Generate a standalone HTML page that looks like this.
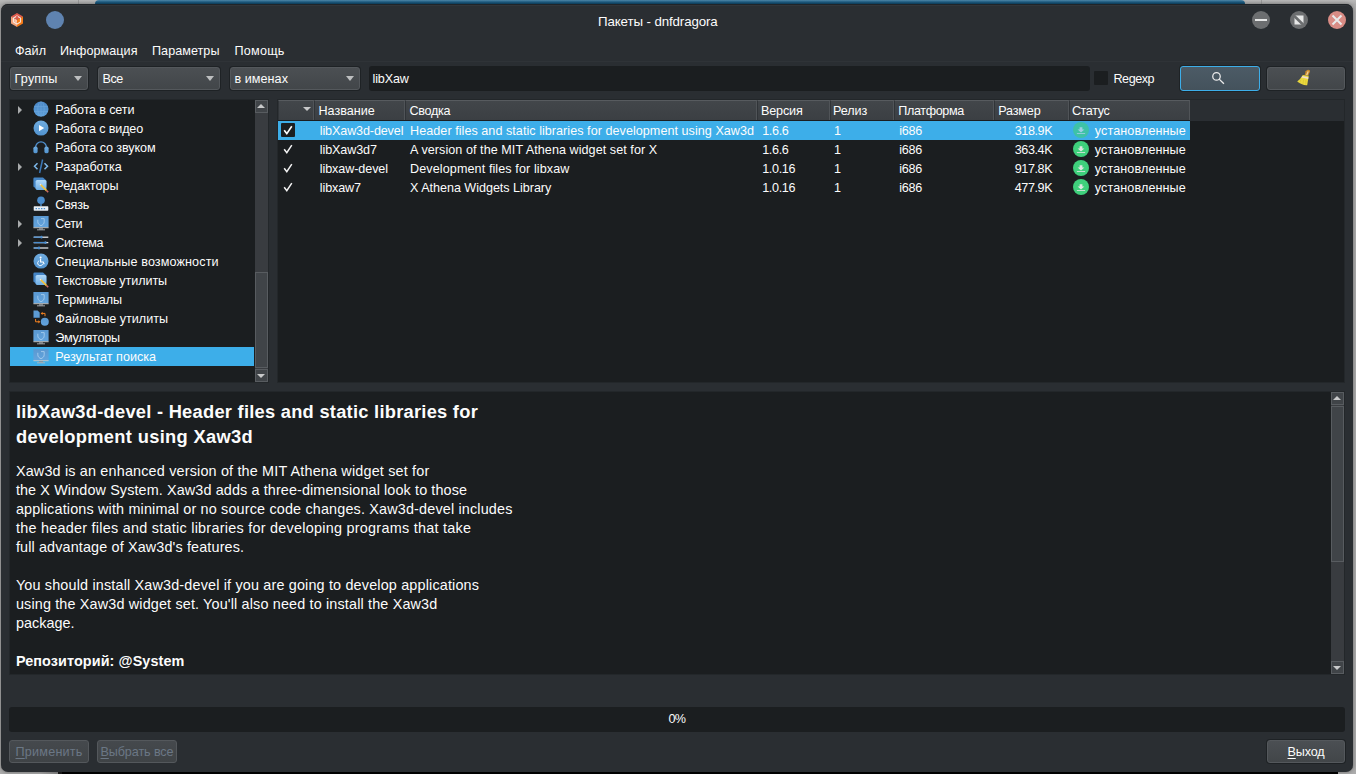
<!DOCTYPE html>
<html lang="ru">
<head>
<meta charset="utf-8">
<title>Пакеты - dnfdragora</title>
<style>
*{box-sizing:border-box;margin:0;padding:0}
html,body{width:1356px;height:774px;overflow:hidden}
body{position:relative;background:#adadad;font-family:"Liberation Sans",sans-serif;font-size:12.6px;color:#fcfcfc;-webkit-font-smoothing:antialiased}
.abs{position:absolute}
u{text-underline-offset:2px;text-decoration-thickness:1px}
#bgtop{left:0;top:0;width:1356px;height:5px;background:linear-gradient(#b9b9b9,#aaaaaa)}
#bluebar{left:95px;top:0;width:1150px;height:5px;border-radius:4px 4px 0 0;background:linear-gradient(#5189a9 0%,#1f6088 40%,#0e4768 85%)}
#bgbottom{left:58px;top:770px;width:1280px;height:4px;background:#000}
.vline{top:0;width:1px;height:4px;background:#9a9a9a}
#win{left:1px;top:4px;width:1352px;height:768px;border-radius:7px;background:#2a2e32;box-shadow:inset 0 1px 0 #202428,inset 0 2px 0 rgba(255,255,255,.035),0 0 4px rgba(0,0,0,.4)}
.t{position:absolute;white-space:nowrap;line-height:19px;height:19px}
#title{left:0;width:1316px;top:11px;text-align:center;font-size:13.2px}
.menu{top:41px}
.sep{left:1px;top:61px;width:1352px;height:1px;background:#2f3337}
.combo{position:absolute;top:67px;height:23px;border:1px solid #54585c;border-radius:3px;background:linear-gradient(#4b4f53,#424649);box-shadow:0 0 0 1px rgba(24,27,29,.6)}
.combo .t{left:4px;top:1px}
.combo:after{content:"";position:absolute;right:5.5px;top:8px;border:4px solid transparent;border-top:5px solid #bdbfc0;border-bottom:0}
.field{background:#1b1e20;border-radius:3px}
.btn{position:absolute;border:1px solid #54585c;border-radius:3px;background:linear-gradient(#4b4f53,#424649);box-shadow:0 0 0 1px rgba(24,27,29,.6);text-align:center}
.btn.dis{color:#6f7478;background:linear-gradient(#45494d,#3f4346);border-color:#54585c;box-shadow:none}
.view{position:absolute;background:#1b1e20;border:1px solid #23272a}
.sbtrack{position:absolute;background:#393c40}
.sbbtn{position:absolute;width:13px;height:13px;background:#404448;border:1px solid #585c60}
.sbh{position:absolute;width:13px;background:#404448;border:1px solid #585c60}
.up:after,.dn:after{content:"";position:absolute;left:.8px;top:3px;border:4px solid transparent}
.up:after{border-bottom:4px solid #c8c9ca;border-top:0}
.dn:after{border-top:4px solid #c8c9ca;border-bottom:0;top:3.5px}
.row{position:absolute;left:0;height:19px;width:100%}
.sel{background:#3daee9}
.exp{position:absolute;border:4px solid transparent;border-left:4.5px solid #a9abac;border-right:0}
.ico{position:absolute;left:23px;top:1px;width:16px;height:16px}
.row .t{left:45px;top:0}
.hdr{position:absolute;top:0;height:20px;background:linear-gradient(#42464a,#3b3f43);border-top:1px solid #575b5f;border-right:1px solid #505458;border-left:1px solid #303438}
.hdr .t{left:4px;top:1px}
.cb{position:absolute;left:3px;top:2px;width:14px;height:14px;background:#1b1e20;border-radius:1px}
.trow{position:absolute;left:0;width:912px;height:19px}
.trow .t{top:0}
.st{position:absolute;left:795px;top:1px;width:16px;height:16px}
</style>
</head>
<body>
<svg width="0" height="0" style="position:absolute">
<defs>
<linearGradient id="gb" x1="0" y1="0" x2="0" y2="1"><stop offset="0" stop-color="#6db0e6"/><stop offset="1" stop-color="#3f7ec0"/></linearGradient>
<linearGradient id="gm" x1="0" y1="0" x2="0" y2="1"><stop offset="0" stop-color="#5a98d1"/><stop offset="1" stop-color="#63a4dd"/></linearGradient>
<linearGradient id="gp" x1="0" y1="0" x2="0" y2="1"><stop offset="0" stop-color="#70acdf"/><stop offset="1" stop-color="#5193cf"/></linearGradient>
<linearGradient id="ge" x1="0" y1="0" x2="0" y2="1"><stop offset="0" stop-color="#b2d9f8"/><stop offset="1" stop-color="#6eaee6"/></linearGradient>
<linearGradient id="gb2" x1="0" y1="0" x2="0" y2="1"><stop offset="0" stop-color="#4885c4"/><stop offset="1" stop-color="#5fa1db"/></linearGradient>
<symbol id="i-globe" viewBox="0 0 16 16"><circle cx="8" cy="8.1" r="7.5" fill="url(#gb2)"/><g fill="none" stroke="#78b0e2" stroke-width=".7" opacity=".6"><ellipse cx="8" cy="8.1" rx="3.2" ry="7.3"/><path d="M8 .8V15.4M1.2 5.6H14.8M1.2 10.6H14.8"/></g></symbol>
<symbol id="i-play" viewBox="0 0 16 16"><circle cx="8" cy="8.1" r="7.5" fill="url(#gp)"/><path d="M6 4.9 L11.2 8.1 L6 11.3 Z" fill="#fff"/></symbol>
<symbol id="i-head" viewBox="0 0 16 16"><path d="M2.6 9.5 V8.4 A5.4 5.6 0 0 1 13.4 8.4 V9.5" fill="none" stroke="#4f8fce" stroke-width="1.3"/><rect x=".4" y="7.4" width="4.2" height="6.9" rx="1.9" fill="url(#gp)"/><rect x="11.4" y="7.4" width="4.2" height="6.9" rx="1.9" fill="url(#gp)"/></symbol>
<symbol id="i-code" viewBox="0 0 16 16"><path d="M4.5 5.2 L1.5 8.2 L4.5 11.2 M11.5 5.2 L14.5 8.2 L11.5 11.2" fill="none" stroke="#7db8ea" stroke-width="1.5"/><path d="M9.6 1.5 L6.6 15" stroke="#3b78b8" stroke-width="1.5"/></symbol>
<symbol id="i-edit" viewBox="0 0 16 16"><path d="M.4 1.8 Q.4 .6 1.6 .6 H10 L13.4 3.4 V10 L11.6 13 H4.6 L.4 9.4 Z" fill="#4585c6"/><rect x="2.6" y="2.9" width="10.8" height="10" rx="1.6" fill="url(#ge)"/><path d="M7.6 7.6 L13.6 13.6" stroke="#f2c23c" stroke-width="1.7"/><path d="M13.6 13.6 L15.2 15.2" stroke="#cf6a62" stroke-width="1.5"/><path d="M7 7 L8 8" stroke="#e6e6e6" stroke-width="1.2"/></symbol>
<symbol id="i-comm" viewBox="0 0 16 16"><circle cx="8" cy="4.3" r="3.8" fill="#4a8ccc"/><rect x="7.3" y="8" width="1.4" height="2.5" fill="#4a8ccc"/><rect x=".7" y="10.3" width="14.6" height="4.4" rx=".6" fill="#e8eef4"/><g fill="#4a8ccc"><rect x="2.6" y="12" width="1.4" height="1.2"/><rect x="5.3" y="12" width="1.4" height="1.2"/><rect x="8" y="12" width="1.4" height="1.2"/><rect x="10.7" y="12" width="1.4" height="1.2"/></g></symbol>
<symbol id="i-mon" viewBox="0 0 16 16"><rect x=".4" y=".9" width="15.2" height="11.4" rx=".5" fill="url(#gm)"/><rect x=".4" y="12.2" width="15.2" height="1" fill="#c3c6c9"/><rect x="6" y="13.2" width="4" height="1.3" fill="#8d9196"/><rect x="4" y="14.4" width="8" height=".9" fill="#b4b7ba"/><path d="M8 3.6 H11.2 V6.8 C11.2 8.9 9.6 10 8 10.7 C6.4 10 4.8 8.9 4.8 6.8 V4.8" fill="none" stroke="#b4d6f2" stroke-width=".75"/></symbol>
<symbol id="i-slid" viewBox="0 0 16 16"><g stroke-width="1.3"><path d="M.7 3.2H15.3" stroke="#dfe3e6"/><path d="M.7 3.2H8.5" stroke="#4a8ccc"/><path d="M.7 8.6H15.3" stroke="#dfe3e6"/><path d="M.7 8.6H12.5" stroke="#4a8ccc"/><path d="M.7 14H15.3" stroke="#dfe3e6"/><path d="M.7 14H6" stroke="#4a8ccc"/></g><g fill="#4a8ccc"><rect x="7.5" y="1.8" width="2" height="2.8" rx=".8"/><rect x="11.5" y="7.2" width="2" height="2.8" rx=".8"/><rect x="5" y="12.6" width="2" height="2.8" rx=".8"/></g></symbol>
<symbol id="i-acc" viewBox="0 0 16 16"><circle cx="8" cy="8.1" r="7.5" fill="url(#gp)"/><circle cx="7.6" cy="4.4" r="1" fill="#fff"/><path d="M7.6 5.7 V9 H10.2 L11.2 11.3" fill="none" stroke="#fff" stroke-width="1.1"/><path d="M6.2 7.7 A2.6 2.6 0 1 0 9.8 10.7" fill="none" stroke="#fff" stroke-width=".9"/></symbol>
<symbol id="i-file" viewBox="0 0 16 16"><path d="M.5 .5 H4.6 L6.7 2.6 V7.7 H.5 Z" fill="#5c9bd4"/><circle cx="11.8" cy="11.7" r="4" fill="url(#gm)"/><path d="M8.6 3.4 H12 V6.2 M2.6 9 V11.8 H6" fill="none" stroke="#f58220" stroke-width="1"/><path d="M9.6 1.8 L7.7 3.4 L9.6 5 Z M5.4 10.2 L7.3 11.8 L5.4 13.4 Z" fill="#f58220"/></symbol>
<symbol id="i-inst" viewBox="0 0 16 16"><circle cx="8" cy="8" r="8" fill="#3fd07c"/><path d="M6.6 5.2 H9.4 V7.4 H11.4 L8 10.6 L4.6 7.4 H6.6 Z" fill="#dfe6e2"/><rect x="3.9" y="11" width="8.2" height=".9" fill="#d4e2da"/></symbol>
</defs></svg>
<div id="bgtop" class="abs"></div>
<div class="abs vline" style="left:78px"></div>
<div class="abs vline" style="left:1261px"></div>
<div id="bluebar" class="abs"></div>
<div id="bgbottom" class="abs"></div>
<div class="abs" style="left:40px;top:770px;width:18px;height:4px;background:linear-gradient(90deg,#adadad,#8a8a8a)"></div>
<div class="abs" style="left:58px;top:770px;width:4px;height:4px;background:#1c1c1c"></div>
<div id="win" class="abs"></div>

<!-- title bar -->
<svg class="abs" style="left:9px;top:12px" width="16" height="16" viewBox="0 0 16 16">
 <polygon points="8,1 14,4.5 8,8 2,4.5" fill="#dc5a4c"/>
 <polygon points="2,4.5 8,8 8,15 2,11.5" fill="#f2a27a"/>
 <polygon points="14,4.5 8,8 8,15 14,11.5" fill="#f47a18"/>
 <polygon points="8,4 11.5,6 11.5,10 8,12 4.5,10 4.5,6" fill="none" stroke="#fbeee8" stroke-width="1.2" opacity=".9"/>
 <polygon points="5.6,6.6 8,8 8,10.8 5.6,9.4" fill="#f6d6c8" opacity=".7"/>
 <polygon points="10.4,6.6 8,8 8,10.8 10.4,9.4" fill="#f47a18"/>
 <rect x="7" y="4.2" width="2" height="1.2" fill="#dc5a4c"/>
</svg>
<div class="abs" style="left:45.8px;top:10.6px;width:18.4px;height:18.4px;border-radius:50%;background:#5f83b0"></div>
<svg class="abs" style="left:1251px;top:10px" width="96" height="20" viewBox="0 0 96 20">
 <circle cx="10" cy="10" r="9" fill="#6c6e70"/><rect x="4" y="9" width="12" height="2" fill="#e6e7e7"/>
 <circle cx="48" cy="10" r="9" fill="#6c6e70"/><rect x="43.5" y="5.5" width="9" height="9" fill="#e6e7e7"/><path d="M42.5 5.2 L53 15.5" stroke="#6c6e70" stroke-width="2.6"/>
 <circle cx="86" cy="10" r="9" fill="#d98c85"/><path d="M81.5 5.5 L90.5 14.5 M90.5 5.5 L81.5 14.5" stroke="#e9eaea" stroke-width="2"/>
</svg>

<!-- menu -->
<div class="abs sep"></div>

<!-- toolbar -->
<div class="combo" style="left:10px;width:78px"></div>
<div class="combo" style="left:98px;width:122px"></div>
<div class="combo" style="left:230px;width:130px"></div>
<div class="abs field" style="left:369px;top:66px;width:721px;height:25px"></div>
<div class="abs field" style="left:1094px;top:71px;width:14px;height:14px;border-radius:1px"></div>
<div class="btn" style="left:1180px;top:66px;width:80px;height:25px;border-color:#3daee9;background:linear-gradient(#4c5b66,#44525c)">
 <svg style="position:absolute;left:30px;top:3px" width="16" height="16" viewBox="0 0 16 16"><circle cx="5.5" cy="6.4" r="3.75" fill="none" stroke="#ececec" stroke-width="1.25"/><path d="M8.2 9.1 L12.9 13.8" stroke="#ececec" stroke-width="1.3"/></svg>
</div>
<div class="btn" style="left:1267px;top:67px;width:78px;height:23px">
 <svg style="position:absolute;left:-1px;top:-1px" width="78" height="23" viewBox="0 0 78 23"><path d="M40.2 2.9 Q41.6 2.3 42.8 3.3 L43 4.6 L41.3 8.5 L37.7 7.9 L38.7 4.3 Z" fill="#c8882c"/><path d="M40.6 4.2 L41.8 4.6 L40.4 8.2 L39 8 Z" fill="#efcf96"/><path d="M35.8 7.9 L41.7 8.8 L40.2 18.2 Q37.8 18.6 35 17.3 Q32.2 16.2 30.2 14.6 Q33.6 11.8 35.8 7.9 Z" fill="#e9d83e"/><path d="M35.3 9.1 L41.5 10.3 L41.2 12 L34.5 10.5 Z" fill="#f0dccc"/><path d="M33.9 12.5 L32.8 15.5 M36.7 12.5 L36 16.8 M38.9 13 L38.7 17.6" stroke="#d6c32e" stroke-width=".6" fill="none"/></svg>
</div>

<!-- tree -->
<div class="view" id="tree" style="left:9px;top:99px;width:260px;height:284px"></div>
<div class="sbtrack" style="left:255px;top:100px;width:13px;height:282px"></div>
<div class="sbbtn up" style="left:255px;top:100px"></div>
<div class="sbbtn dn" style="left:255px;top:369px"></div>
<div class="sbh" style="left:255px;top:272px;height:96px"></div>
<div class="exp" style="left:18px;top:105.7px"></div>
<svg class="abs" style="left:33px;top:101px" width="16" height="16"><use href="#i-globe"/></svg>
<svg class="abs" style="left:33px;top:120px" width="16" height="16"><use href="#i-play"/></svg>
<svg class="abs" style="left:33px;top:139px" width="16" height="16"><use href="#i-head"/></svg>
<div class="exp" style="left:18px;top:162.7px"></div>
<svg class="abs" style="left:33px;top:158px" width="16" height="16"><use href="#i-code"/></svg>
<svg class="abs" style="left:33px;top:177px" width="16" height="16"><use href="#i-edit"/></svg>
<svg class="abs" style="left:33px;top:196px" width="16" height="16"><use href="#i-comm"/></svg>
<div class="exp" style="left:18px;top:219.7px"></div>
<svg class="abs" style="left:33px;top:215px" width="16" height="16"><use href="#i-mon"/></svg>
<div class="exp" style="left:18px;top:238.7px"></div>
<svg class="abs" style="left:33px;top:234px" width="16" height="16"><use href="#i-slid"/></svg>
<svg class="abs" style="left:33px;top:253px" width="16" height="16"><use href="#i-acc"/></svg>
<svg class="abs" style="left:33px;top:272px" width="16" height="16"><use href="#i-edit"/></svg>
<svg class="abs" style="left:33px;top:291px" width="16" height="16"><use href="#i-mon"/></svg>
<svg class="abs" style="left:33px;top:310px" width="16" height="16"><use href="#i-file"/></svg>
<svg class="abs" style="left:33px;top:329px" width="16" height="16"><use href="#i-mon"/></svg>
<div class="abs sel" style="left:10px;top:347px;width:244px;height:19px"></div>
<svg class="abs" style="left:33px;top:348px" width="16" height="16" style="opacity:.55"><use href="#i-mon"/></svg>

<!-- table -->
<div class="view" id="table" style="left:277px;top:99px;width:1068px;height:284px"></div>
<div class="hdr" style="left:278px;top:100px;width:36px"></div>
<div class="hdr" style="left:314px;top:100px;width:91px"></div>
<div class="hdr" style="left:405px;top:100px;width:352px"></div>
<div class="hdr" style="left:757px;top:100px;width:73px"></div>
<div class="hdr" style="left:830px;top:100px;width:64px"></div>
<div class="hdr" style="left:894px;top:100px;width:100px"></div>
<div class="hdr" style="left:994px;top:100px;width:75px"></div>
<div class="hdr" style="left:1069px;top:100px;width:121px"></div>
<div class="abs" style="left:303px;top:107px;border:4px solid transparent;border-top:4.5px solid #c8c9ca;border-bottom:0"></div>
<div class="abs" style="left:1190px;top:100px;width:154px;height:21px;background:#2a2e32"></div>
<div class="abs sel" style="left:278px;top:121px;width:912px;height:19px"></div>
<div class="cb" style="left:281px;top:123px"><svg width="14" height="14" viewBox="0 0 14 14"><path d="M3.2 7.2 L5.8 10.6 L10.8 3.2" fill="none" stroke="#fff" stroke-width="1.6"/></svg></div>
<svg class="abs" style="left:1073px;top:122px;opacity:.6" width="16" height="16"><use href="#i-inst"/></svg>
<svg class="abs" style="left:281px;top:142px" width="14" height="14" viewBox="0 0 14 14"><path d="M3.2 7.2 L5.8 10.6 L10.8 3.2" fill="none" stroke="#f4f4f4" stroke-width="1.5"/></svg>
<svg class="abs" style="left:1073px;top:141px" width="16" height="16"><use href="#i-inst"/></svg>
<svg class="abs" style="left:281px;top:161px" width="14" height="14" viewBox="0 0 14 14"><path d="M3.2 7.2 L5.8 10.6 L10.8 3.2" fill="none" stroke="#f4f4f4" stroke-width="1.5"/></svg>
<svg class="abs" style="left:1073px;top:160px" width="16" height="16"><use href="#i-inst"/></svg>
<svg class="abs" style="left:281px;top:180px" width="14" height="14" viewBox="0 0 14 14"><path d="M3.2 7.2 L5.8 10.6 L10.8 3.2" fill="none" stroke="#f4f4f4" stroke-width="1.5"/></svg>
<svg class="abs" style="left:1073px;top:179px" width="16" height="16"><use href="#i-inst"/></svg>

<!-- description -->
<div class="view" id="desc" style="left:9px;top:391px;width:1336px;height:284px"></div>
<div class="sbtrack" style="left:1331px;top:392px;width:13px;height:282px"></div>
<div class="sbbtn up" style="left:1331px;top:392px"></div>
<div class="sbbtn dn" style="left:1331px;top:661px"></div>
<div class="sbh" style="left:1331px;top:406px;height:156px"></div>
<!-- progress -->
<div class="abs field" style="left:9px;top:707px;width:1336px;height:25px"></div>
<!-- buttons -->
<div class="btn dis" style="left:9px;top:740px;width:80px;height:23px"></div>
<div class="btn dis" style="left:97px;top:740px;width:80px;height:23px"></div>
<div class="btn" style="left:1267px;top:740px;width:78px;height:23px"></div>
<div class="t" style="left:598px;top:12px;font-size:13.3px;line-height:19px;height:19px;letter-spacing:-0.106px">Пакеты - dnfdragora</div>
<div class="t" style="left:15px;top:42px;font-size:12.6px;line-height:19px;height:19px;letter-spacing:0.009px">Файл</div>
<div class="t" style="left:60px;top:42px;font-size:12.6px;line-height:19px;height:19px;letter-spacing:0.041px">Информация</div>
<div class="t" style="left:152px;top:42px;font-size:12.6px;line-height:19px;height:19px;letter-spacing:0.042px">Параметры</div>
<div class="t" style="left:234.5px;top:42px;font-size:12.6px;line-height:19px;height:19px;letter-spacing:0.244px">Помощь</div>
<div class="t" style="left:14.6px;top:70px;font-size:12.6px;line-height:19px;height:19px;letter-spacing:0.169px">Группы</div>
<div class="t" style="left:102.5px;top:70px;font-size:12.6px;line-height:19px;height:19px;letter-spacing:-0.481px">Все</div>
<div class="t" style="left:234.5px;top:70px;font-size:12.6px;line-height:19px;height:19px;letter-spacing:0.046px">в именах</div>
<div class="t" style="left:372.6px;top:70px;font-size:12.6px;line-height:19px;height:19px;letter-spacing:-0.165px">libXaw</div>
<div class="t" style="left:1113.5px;top:70px;font-size:12.6px;line-height:19px;height:19px;letter-spacing:-0.477px">Regexp</div>
<div class="t" style="left:55.3px;top:101px;font-size:12.6px;line-height:19px;height:19px;letter-spacing:-0.147px">Работа в сети</div>
<div class="t" style="left:55.3px;top:120px;font-size:12.6px;line-height:19px;height:19px;letter-spacing:-0.158px">Работа с видео</div>
<div class="t" style="left:55.3px;top:139px;font-size:12.6px;line-height:19px;height:19px;letter-spacing:-0.103px">Работа со звуком</div>
<div class="t" style="left:55.3px;top:158px;font-size:12.6px;line-height:19px;height:19px;letter-spacing:-0.088px">Разработка</div>
<div class="t" style="left:55.3px;top:177px;font-size:12.6px;line-height:19px;height:19px;letter-spacing:-0.008px">Редакторы</div>
<div class="t" style="left:55.3px;top:196px;font-size:12.6px;line-height:19px;height:19px;letter-spacing:-0.181px">Связь</div>
<div class="t" style="left:55.3px;top:215px;font-size:12.6px;line-height:19px;height:19px;letter-spacing:-0.424px">Сети</div>
<div class="t" style="left:55.3px;top:234px;font-size:12.6px;line-height:19px;height:19px;letter-spacing:-0.405px">Система</div>
<div class="t" style="left:55.3px;top:253px;font-size:12.6px;line-height:19px;height:19px;letter-spacing:0.112px">Специальные возможности</div>
<div class="t" style="left:55.3px;top:272px;font-size:12.6px;line-height:19px;height:19px;letter-spacing:-0.080px">Текстовые утилиты</div>
<div class="t" style="left:55.3px;top:291px;font-size:12.6px;line-height:19px;height:19px;letter-spacing:-0.041px">Терминалы</div>
<div class="t" style="left:55.3px;top:310px;font-size:12.6px;line-height:19px;height:19px;letter-spacing:0.009px">Файловые утилиты</div>
<div class="t" style="left:55.3px;top:329px;font-size:12.6px;line-height:19px;height:19px;letter-spacing:-0.235px">Эмуляторы</div>
<div class="t" style="left:55.3px;top:348px;font-size:12.6px;line-height:19px;height:19px;letter-spacing:0.005px">Результат поиска</div>
<div class="t" style="left:318.4px;top:102px;font-size:12.6px;line-height:19px;height:19px;letter-spacing:0.029px">Название</div>
<div class="t" style="left:409.4px;top:102px;font-size:12.6px;line-height:19px;height:19px;letter-spacing:-0.294px">Сводка</div>
<div class="t" style="left:761px;top:102px;font-size:12.6px;line-height:19px;height:19px;letter-spacing:-0.157px">Версия</div>
<div class="t" style="left:833px;top:102px;font-size:12.6px;line-height:19px;height:19px;letter-spacing:-0.065px">Релиз</div>
<div class="t" style="left:898.2px;top:102px;font-size:12.6px;line-height:19px;height:19px;letter-spacing:-0.346px">Платформа</div>
<div class="t" style="left:998.2px;top:102px;font-size:12.6px;line-height:19px;height:19px;letter-spacing:-0.163px">Размер</div>
<div class="t" style="left:1071.9px;top:102px;font-size:12.6px;line-height:19px;height:19px;letter-spacing:-0.402px">Статус</div>
<div class="t" style="left:319.8px;top:122px;font-size:12.6px;line-height:19px;height:19px;letter-spacing:-0.135px">libXaw3d-devel</div>
<div class="t" style="left:410.1px;top:122px;font-size:12.6px;line-height:19px;height:19px;letter-spacing:0.039px">Header files and static libraries for development using Xaw3d</div>
<div class="t" style="left:762.2px;top:122px;font-size:12.6px;line-height:19px;height:19px;letter-spacing:-0.337px">1.6.6</div>
<div class="t" style="left:834px;top:122px;font-size:12.6px;line-height:19px;height:19px;letter-spacing:-1.416px">1</div>
<div class="t" style="left:899.3px;top:122px;font-size:12.6px;line-height:19px;height:19px;letter-spacing:-0.261px">i686</div>
<div class="t" style="left:1014.7px;top:122px;font-size:12.6px;line-height:19px;height:19px;letter-spacing:-0.404px">318.9K</div>
<div class="t" style="left:1094.8px;top:122px;font-size:12.6px;line-height:19px;height:19px;letter-spacing:0.099px">установленные</div>
<div class="t" style="left:319.8px;top:141px;font-size:12.6px;line-height:19px;height:19px;letter-spacing:-0.121px">libXaw3d7</div>
<div class="t" style="left:410.1px;top:141px;font-size:12.6px;line-height:19px;height:19px;letter-spacing:0.053px">A version of the MIT Athena widget set for X</div>
<div class="t" style="left:762.2px;top:141px;font-size:12.6px;line-height:19px;height:19px;letter-spacing:-0.337px">1.6.6</div>
<div class="t" style="left:834px;top:141px;font-size:12.6px;line-height:19px;height:19px;letter-spacing:-1.416px">1</div>
<div class="t" style="left:899.3px;top:141px;font-size:12.6px;line-height:19px;height:19px;letter-spacing:-0.261px">i686</div>
<div class="t" style="left:1014.7px;top:141px;font-size:12.6px;line-height:19px;height:19px;letter-spacing:-0.404px">363.4K</div>
<div class="t" style="left:1094.8px;top:141px;font-size:12.6px;line-height:19px;height:19px;letter-spacing:0.099px">установленные</div>
<div class="t" style="left:319.8px;top:160px;font-size:12.6px;line-height:19px;height:19px;letter-spacing:-0.095px">libxaw-devel</div>
<div class="t" style="left:410.1px;top:160px;font-size:12.6px;line-height:19px;height:19px;letter-spacing:0.091px">Development files for libxaw</div>
<div class="t" style="left:762.2px;top:160px;font-size:12.6px;line-height:19px;height:19px;letter-spacing:-0.330px">1.0.16</div>
<div class="t" style="left:834px;top:160px;font-size:12.6px;line-height:19px;height:19px;letter-spacing:-1.416px">1</div>
<div class="t" style="left:899.3px;top:160px;font-size:12.6px;line-height:19px;height:19px;letter-spacing:-0.261px">i686</div>
<div class="t" style="left:1014.7px;top:160px;font-size:12.6px;line-height:19px;height:19px;letter-spacing:-0.404px">917.8K</div>
<div class="t" style="left:1094.8px;top:160px;font-size:12.6px;line-height:19px;height:19px;letter-spacing:0.099px">установленные</div>
<div class="t" style="left:319.8px;top:179px;font-size:12.6px;line-height:19px;height:19px;letter-spacing:-0.123px">libxaw7</div>
<div class="t" style="left:410.1px;top:179px;font-size:12.6px;line-height:19px;height:19px;letter-spacing:-0.039px">X Athena Widgets Library</div>
<div class="t" style="left:762.2px;top:179px;font-size:12.6px;line-height:19px;height:19px;letter-spacing:-0.330px">1.0.16</div>
<div class="t" style="left:834px;top:179px;font-size:12.6px;line-height:19px;height:19px;letter-spacing:-1.416px">1</div>
<div class="t" style="left:899.3px;top:179px;font-size:12.6px;line-height:19px;height:19px;letter-spacing:-0.261px">i686</div>
<div class="t" style="left:1014.7px;top:179px;font-size:12.6px;line-height:19px;height:19px;letter-spacing:-0.404px">477.9K</div>
<div class="t" style="left:1094.8px;top:179px;font-size:12.6px;line-height:19px;height:19px;letter-spacing:0.099px">установленные</div>
<div class="t" style="left:15.9px;top:399px;font-size:18.3px;line-height:25px;height:25px;font-weight:700;letter-spacing:0.261px">libXaw3d-devel - Header files and static libraries for</div>
<div class="t" style="left:15.9px;top:424px;font-size:18.3px;line-height:25px;height:25px;font-weight:700;letter-spacing:0.330px">development using Xaw3d</div>
<div class="t" style="left:15.9px;top:462px;font-size:14.4px;line-height:19px;height:19px;letter-spacing:0.173px">Xaw3d is an enhanced version of the MIT Athena widget set for</div>
<div class="t" style="left:15.9px;top:481px;font-size:14.4px;line-height:19px;height:19px;letter-spacing:0.112px">the X Window System. Xaw3d adds a three-dimensional look to those</div>
<div class="t" style="left:15.9px;top:500px;font-size:14.4px;line-height:19px;height:19px;letter-spacing:0.163px">applications with minimal or no source code changes. Xaw3d-devel includes</div>
<div class="t" style="left:15.9px;top:519px;font-size:14.4px;line-height:19px;height:19px;letter-spacing:0.261px">the header files and static libraries for developing programs that take</div>
<div class="t" style="left:15.9px;top:538px;font-size:14.4px;line-height:19px;height:19px;letter-spacing:0.135px">full advantage of Xaw3d&#39;s features.</div>
<div class="t" style="left:15.9px;top:576px;font-size:14.4px;line-height:19px;height:19px;letter-spacing:0.166px">You should install Xaw3d-devel if you are going to develop applications</div>
<div class="t" style="left:15.9px;top:595px;font-size:14.4px;line-height:19px;height:19px;letter-spacing:0.153px">using the Xaw3d widget set. You&#39;ll also need to install the Xaw3d</div>
<div class="t" style="left:15.9px;top:614px;font-size:14.4px;line-height:19px;height:19px;letter-spacing:0.026px">package.</div>
<div class="t" style="left:15.9px;top:652px;font-size:14.4px;line-height:19px;height:19px;font-weight:700;letter-spacing:0.093px">Репозиторий: @System</div>
<div class="t" style="left:668.5px;top:710px;font-size:12.6px;line-height:19px;height:19px;letter-spacing:-0.802px">0%</div>
<div class="t" style="left:15.5px;top:743px;font-size:12.6px;line-height:19px;height:19px;color:#6b7785;letter-spacing:0.224px"><u>П</u>рименить</div>
<div class="t" style="left:100.5px;top:743px;font-size:12.6px;line-height:19px;height:19px;color:#6b7785;letter-spacing:-0.104px"><u>В</u>ыбрать все</div>
<div class="t" style="left:1287.5px;top:743px;font-size:12.6px;line-height:19px;height:19px;letter-spacing:-0.156px"><u>В</u>ыход</div>

</body>
</html>
